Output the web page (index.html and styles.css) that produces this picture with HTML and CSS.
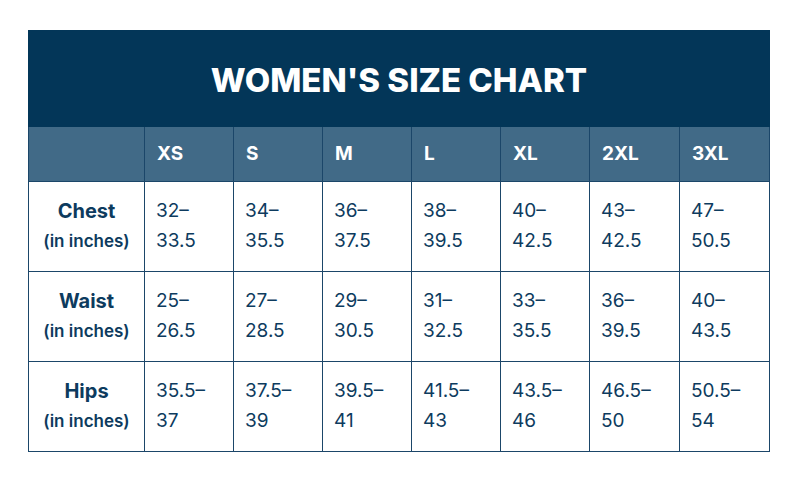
FILE: index.html
```html
<!DOCTYPE html>
<html>
<head>
<meta charset="utf-8">
<link rel="stylesheet" href="styles.css">
</head>
<body>
<div class="chart">
  <div class="title">WOMEN'S SIZE CHART</div>
  <table class="sizes">
    <colgroup>
      <col class="c-label"><col class="c-size"><col class="c-size"><col class="c-size"><col class="c-size"><col class="c-size"><col class="c-size2"><col class="c-size2">
    </colgroup>
    <thead>
      <tr><th></th><th>XS</th><th>S</th><th>M</th><th>L</th><th>XL</th><th>2XL</th><th>3XL</th></tr>
    </thead>
    <tbody>
      <tr><td class="label"><span class="name">Chest</span><span class="unit">(in inches)</span></td>
        <td>32–<br>33.5</td><td>34–<br>35.5</td><td>36–<br>37.5</td><td>38–<br>39.5</td><td>40–<br>42.5</td><td>43–<br>42.5</td><td>47–<br>50.5</td></tr>
      <tr><td class="label"><span class="name">Waist</span><span class="unit">(in inches)</span></td>
        <td>25–<br>26.5</td><td>27–<br>28.5</td><td>29–<br>30.5</td><td>31–<br>32.5</td><td>33–<br>35.5</td><td>36–<br>39.5</td><td>40–<br>43.5</td></tr>
      <tr><td class="label"><span class="name">Hips</span><span class="unit">(in inches)</span></td>
        <td>35.5–<br>37</td><td>37.5–<br>39</td><td>39.5–<br>41</td><td>41.5–<br>43</td><td>43.5–<br>46</td><td>46.5–<br>50</td><td>50.5–<br>54</td></tr>
    </tbody>
  </table>
</div>
</body>
</html>
```

FILE: styles.css
```css
html, body {
  margin: 0;
  padding: 0;
  background: #ffffff;
}
body {
  font-family: Inter, "Liberation Sans", sans-serif;
  color: #0d3b5e;
}
.chart {
  width: 742px;
  margin: 30px 0 0 28px;
}
.title {
  height: 97px;
  box-sizing: border-box;
  background: #033658;
  color: #ffffff;
  font-weight: 800;
  font-size: 33px;
  display: flex;
  align-items: center;
  justify-content: center;
  padding-top: 2px;
}
.sizes {
  width: 742px;
  border-collapse: collapse;
  table-layout: fixed;
}
.c-label { width: 116px; }
.c-size { width: 89px; }
.c-size2 { width: 90px; }
.sizes th, .sizes td {
  border: 1.5px solid #1b4669;
  text-align: left;
  vertical-align: middle;
}
.sizes thead th {
  background: #416a87;
  color: #ffffff;
  font-weight: 700;
  font-size: 19px;
  height: 54px;
  box-sizing: border-box;
  padding: 0 12px;
  border-top: none;
}
.sizes tbody td {
  height: 90px;
  box-sizing: border-box;
  padding: 0 11px;
  font-size: 19px;
  line-height: 30px;
  font-weight: 400;
}
.sizes tbody td.label {
  text-align: center;
  padding: 0 4px;
}
.name {
  display: block;
  font-weight: 700;
  font-size: 20px;
  line-height: 30px;
}
.unit {
  display: block;
  font-weight: 600;
  font-size: 17px;
  line-height: 30px;
}
```
